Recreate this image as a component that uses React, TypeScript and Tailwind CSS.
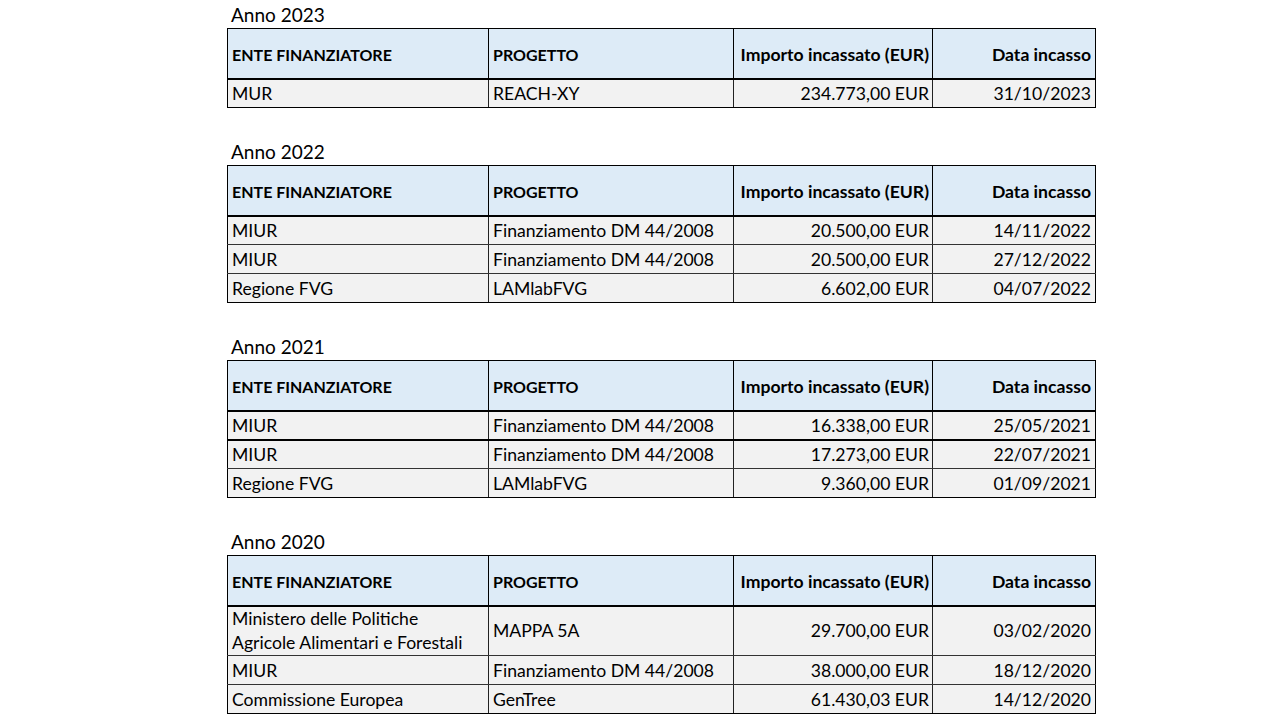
import React from "react";

type Row = {
  ente: string[];
  progetto: string;
  importo: string;
  data: string;
  thick?: boolean;
};

type Year = { anno: string; rows: Row[] };

const years: Year[] = [
  {
    anno: "Anno 2023",
    rows: [{ ente: ["MUR"], progetto: "REACH-XY", importo: "234.773,00 EUR", data: "31/10/2023" }],
  },
  {
    anno: "Anno 2022",
    rows: [
      { ente: ["MIUR"], progetto: "Finanziamento DM 44/2008", importo: "20.500,00 EUR", data: "14/11/2022" },
      { ente: ["MIUR"], progetto: "Finanziamento DM 44/2008", importo: "20.500,00 EUR", data: "27/12/2022" },
      { ente: ["Regione FVG"], progetto: "LAMlabFVG", importo: "6.602,00 EUR", data: "04/07/2022" },
    ],
  },
  {
    anno: "Anno 2021",
    rows: [
      { ente: ["MIUR"], progetto: "Finanziamento DM 44/2008", importo: "16.338,00 EUR", data: "25/05/2021", thick: true },
      { ente: ["MIUR"], progetto: "Finanziamento DM 44/2008", importo: "17.273,00 EUR", data: "22/07/2021" },
      { ente: ["Regione FVG"], progetto: "LAMlabFVG", importo: "9.360,00 EUR", data: "01/09/2021" },
    ],
  },
  {
    anno: "Anno 2020",
    rows: [
      {
        ente: ["Ministero delle Politiche", "Agricole Alimentari e Forestali"],
        progetto: "MAPPA 5A",
        importo: "29.700,00 EUR",
        data: "03/02/2020",
      },
      { ente: ["MIUR"], progetto: "Finanziamento DM 44/2008", importo: "38.000,00 EUR", data: "18/12/2020" },
      { ente: ["Commissione Europea"], progetto: "GenTree", importo: "61.430,03 EUR", data: "14/12/2020" },
    ],
  },
];

const YearTable = ({ year }: { year: Year }) => {
  return (
    <section className="flex flex-col">
      <div className="h-[28px] flex items-end pl-[4px] pb-[1px] text-[19px] leading-[24px]">{year.anno}</div>
      <table className="table-fixed border-collapse w-[868px] text-[17.6px] leading-[24px]">
        <colgroup>
          <col className="w-[261px]" />
          <col className="w-[245px]" />
          <col className="w-[199px]" />
          <col className="w-[163px]" />
        </colgroup>
        <thead>
          <tr className="bg-[#ddebf7] h-[50px]">
            <th className="border-[1.5px] border-b-2 border-black text-left pl-[4px] pt-[4px] font-bold text-[16px]">ENTE FINANZIATORE</th>
            <th className="border-[1.5px] border-b-2 border-black border-l border-l-[#222] text-left pl-[4px] pt-[4px] font-bold text-[16px]">PROGETTO</th>
            <th className="border-[1.5px] border-b-2 border-black border-l border-l-[#222] text-right pr-[3px] pt-[4px] font-bold text-[17.6px] whitespace-nowrap">Importo incassato (EUR)</th>
            <th className="border-[1.5px] border-b-2 border-black border-l border-l-[#222] text-right pr-[4px] pt-[4px] font-bold text-[17.6px] whitespace-nowrap">Data incasso</th>
          </tr>
        </thead>
        <tbody>
          {year.rows.map((row, i) => {
            const last = i === year.rows.length - 1;
            const double = row.ente.length > 1;
            const bottom = row.thick ? "border-b-2 border-b-black" : last ? "border-b-[1.5px] border-b-black" : "border-b border-b-[#333]";
            const pad = double ? "py-0" : "pt-[2px]";
            return (
              <tr key={i} className={`bg-[#f2f2f2] ${double ? "h-[48px]" : "h-[29px]"}`}>
                <td className={`border-l-[1.5px] border-l-black pl-[4px] ${pad} ${bottom}`}>
                  {row.ente.map((line) => (
                    <div key={line} className="whitespace-nowrap">{line}</div>
                  ))}
                </td>
                <td className={`border-l border-l-[#222] pl-[4px] ${pad} whitespace-nowrap ${bottom}`}>{row.progetto}</td>
                <td className={`border-l border-l-[#222] text-right pr-[3px] ${pad} whitespace-nowrap ${bottom}`}>{row.importo}</td>
                <td className={`border-l border-l-[#222] border-r-[1.5px] border-r-black text-right pr-[4px] ${pad} whitespace-nowrap ${bottom}`}>{row.data}</td>
              </tr>
            );
          })}
        </tbody>
      </table>
    </section>
  );
};

export default function App() {
  return (
    <div className="w-[1280px] h-[720px] bg-white text-black overflow-hidden font-['Lato',sans-serif]">
      <div className="ml-[227px] flex flex-col gap-[29px]">
        {years.map((y) => (
          <YearTable key={y.anno} year={y} />
        ))}
      </div>
    </div>
  );
}
